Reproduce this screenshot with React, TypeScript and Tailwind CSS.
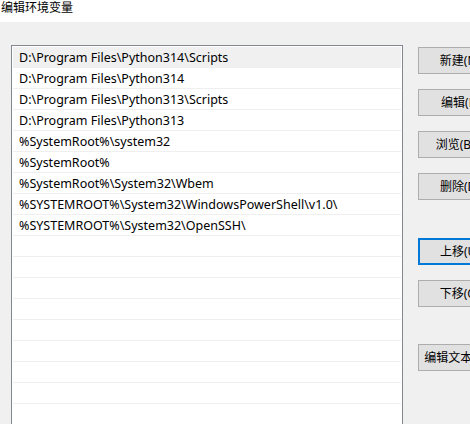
const paths = [
  "D:\\Program Files\\Python314\\Scripts",
  "D:\\Program Files\\Python314",
  "D:\\Program Files\\Python313\\Scripts",
  "D:\\Program Files\\Python313",
  "%SystemRoot%\\system32",
  "%SystemRoot%",
  "%SystemRoot%\\System32\\Wbem",
  "%SYSTEMROOT%\\System32\\WindowsPowerShell\\v1.0\\",
  "%SYSTEMROOT%\\System32\\OpenSSH\\",
];

const ROW_COUNT = 20;

interface DialogButtonProps {
  label: string;
  focused?: boolean;
  className?: string;
}

function DialogButton({ label, focused = false, className = "" }: DialogButtonProps) {
  return (
    <button
      className={`h-[27px] w-[84px] shrink-0 bg-[#e1e1e1] text-[12px] leading-none whitespace-nowrap text-black ${
        focused ? "border-2 border-[#0078d7]" : "border border-[#adadad]"
      } ${className}`}
    >
      {label}
    </button>
  );
}

export default function App() {
  const rows = Array.from({ length: ROW_COUNT }, (_, i) => paths[i] ?? "");

  return (
    <div
      className="h-[424px] w-[470px] overflow-hidden bg-[#f0f0f0] text-[12px] text-black"
      style={{ fontFamily: '"Noto Sans", "Noto Sans CJK SC", sans-serif' }}
    >
      {/* 窗口标题 */}
      <div className="h-[22px] bg-white pl-[1px] leading-[16px]">编辑环境变量</div>

      <div className="flex">
        {/* 路径列表 */}
        <div className="ml-[11px] mt-[23px] h-[420px] w-[392px] shrink-0 border border-[#828790] bg-white px-[1px] pt-[1px]">
          {rows.map((p, i) => (
            <div
              key={i}
              className={`flex h-[21px] items-center border-b border-[#efefef] pl-[6px] pt-[2px] text-[12.5px] leading-none whitespace-nowrap ${
                i === 0 ? "bg-[#f0f0f0]" : ""
              }`}
            >
              {p}
            </div>
          ))}
        </div>

        {/* 操作按钮 */}
        <div className="ml-[15px] flex flex-col pt-[25px]">
          <DialogButton label="新建(N)" />
          <DialogButton label="编辑(E)" className="mt-[15px]" />
          <DialogButton label="浏览(B)..." className="mt-[15px]" />
          <DialogButton label="删除(D)" className="mt-[15px]" />
          <DialogButton label="上移(U)" focused className="mt-[38px]" />
          <DialogButton label="下移(O)" className="mt-[15px]" />
          <DialogButton label="编辑文本(T)..." className="mt-[37px]" />
        </div>
      </div>
    </div>
  );
}
